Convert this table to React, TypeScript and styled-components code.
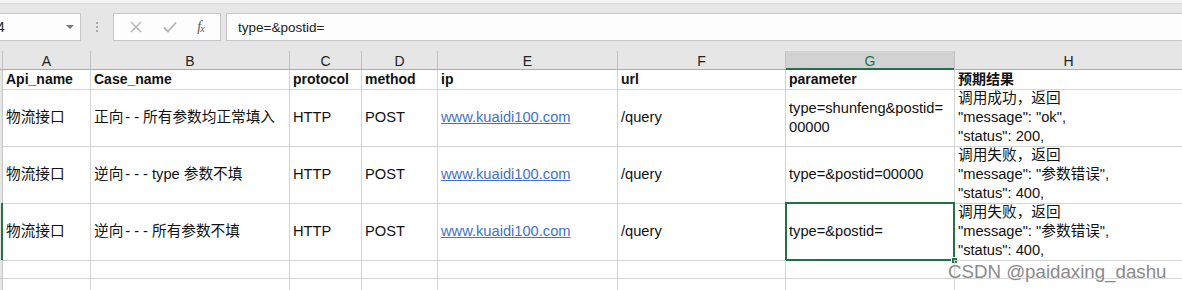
import styled, { createGlobalStyle } from "styled-components";

const GlobalStyle = createGlobalStyle`
  html, body {
    margin: 0;
    padding: 0;
    background: #ffffff;
    overflow: hidden;
  }
  body {
    font-family: "Liberation Sans", "Noto Sans CJK SC", sans-serif;
  }
`;

const COLS = "3px 88px 199px 72px 76px 180px 168px 169px 1fr";
const GRID = "#d4d4d4";
const GREEN = "#217346";

const Sheet = styled.div`
  position: relative;
  width: 1182px;
  height: 290px;
  overflow: hidden;
  background: #ffffff;
`;

const Toolbar = styled.div`
  height: 51px;
  box-sizing: border-box;
  background: #e6e6e6;
  border-top: 3px solid #f3f3f3;
  box-shadow: inset 0 1px 0 #dadada;
  display: flex;
  align-items: flex-start;
  padding-top: 10px;
`;

const NameBox = styled.div`
  width: 81px;
  height: 28px;
  box-sizing: border-box;
  background: #fdfdfd;
  border: 1px solid #c6c6c6;
  border-left: 0;
  display: flex;
  align-items: center;
  justify-content: space-between;
  padding-right: 6px;
  font-size: 14px;
  color: #222;
`;

const NameText = styled.span`
  margin-left: -3px;
`;

const Caret = styled.span`
  width: 0;
  height: 0;
  border-left: 4px solid transparent;
  border-right: 4px solid transparent;
  border-top: 4px solid #777;
`;

const Grip = styled.div`
  width: 32px;
  height: 28px;
  display: flex;
  align-items: center;
  justify-content: center;
`;

const ButtonBox = styled.div`
  width: 108px;
  height: 28px;
  box-sizing: border-box;
  background: #fdfdfd;
  border: 1px solid #c6c6c6;
  display: flex;
  align-items: center;
  justify-content: space-around;
  padding: 0 6px;
`;

const Fx = styled.span`
  font-family: "Liberation Serif", serif;
  font-style: italic;
  font-size: 14px;
  color: #555;
  letter-spacing: -1px;

  sub {
    font-size: 10px;
    vertical-align: -1px;
  }
`;

const FormulaInput = styled.div`
  flex: 1;
  margin-left: 5px;
  height: 28px;
  box-sizing: border-box;
  background: #fdfdfd;
  border: 1px solid #c6c6c6;
  border-right: 0;
  display: flex;
  align-items: center;
  padding-left: 11px;
  font-size: 13.5px;
  color: #222;
`;

const Row = styled.div<{ $h: number }>`
  display: grid;
  grid-template-columns: ${COLS};
  height: ${({ $h }) => $h}px;
`;

const LetterRow = styled(Row)`
  background: #e6e6e6;
  border-bottom: 1px solid #ababab;
  box-sizing: border-box;
`;

const Letter = styled.div<{ $active?: boolean }>`
  display: flex;
  align-items: center;
  justify-content: center;
  font-size: 14px;
  padding-top: 1px;
  box-sizing: border-box;
  border-right: 1px solid #c0c0c0;
  color: ${({ $active }) => ($active ? GREEN : "#222")};
  background: ${({ $active }) => ($active ? "#d2d2d2" : "transparent")};
  box-shadow: ${({ $active }) => ($active ? `inset 0 -2px 0 ${GREEN}` : "none")};
  margin-bottom: ${({ $active }) => ($active ? "-1px" : "0")};

  &:last-child {
    border-right: 0;
  }
`;

const RowHead = styled.div<{ $active?: boolean }>`
  background: #e6e6e6;
  box-sizing: border-box;
  border-bottom: 1px solid #c6c6c6;
  border-right: 1px solid ${({ $active }) => ($active ? GREEN : "#c6c6c6")};
  box-shadow: ${({ $active }) => ($active ? `inset -1px 0 0 ${GREEN}` : "none")};
`;

const Cell = styled.div<{ $bold?: boolean; $link?: boolean }>`
  position: relative;
  box-sizing: border-box;
  border-right: 1px solid ${GRID};
  border-bottom: 1px solid ${GRID};
  padding-left: 3px;
  display: flex;
  flex-direction: column;
  justify-content: center;
  font-size: ${({ $bold }) => ($bold ? "14px" : "14.67px")};
  line-height: 19px;
  white-space: nowrap;
  overflow: visible;
  color: ${({ $link }) => ($link ? "#4472c9" : "#111")};
  font-weight: ${({ $bold }) => ($bold ? 700 : 400)};
  text-decoration: ${({ $link }) => ($link ? "underline" : "none")};

  &:last-child {
    border-right: 0;
  }
`;

const Dashes = styled.span`
  letter-spacing: 4px;
  padding-left: 2px;
`;

const Selection = styled.div`
  position: absolute;
  left: -1px;
  top: -1px;
  right: -1px;
  bottom: -1px;
  border: 2px solid ${GREEN};
  pointer-events: none;
`;

const FillHandle = styled.div`
  position: absolute;
  right: -5px;
  bottom: -5px;
  width: 5px;
  height: 5px;
  background: ${GREEN};
  border: 1px solid #ffffff;
`;

const Watermark = styled.div`
  position: absolute;
  left: 948px;
  top: 261px;
  font-family: "Liberation Sans", sans-serif;
  font-size: 18.7px;
  color: #8a8a8a;
  text-shadow: 0 0 1px #ffffff;
  white-space: nowrap;
`;

const headers = ["Api_name", "Case_name", "protocol", "method", "ip", "url", "parameter", "预期结果"];
const letters = ["A", "B", "C", "D", "E", "F", "G", "H"];

const rows = [
  {
    api: "物流接口",
    pre: "正向",
    dash: "--",
    post: "所有参数均正常填入",
    param: ["type=shunfeng&postid=", "00000"],
    expect: ["调用成功，返回", "\"message\": \"ok\",", "\"status\": 200,"],
  },
  {
    api: "物流接口",
    pre: "逆向",
    dash: "---",
    post: "type 参数不填",
    param: ["type=&postid=00000"],
    expect: ["调用失败，返回", "\"message\": \"参数错误\",", "\"status\": 400,"],
  },
  {
    api: "物流接口",
    pre: "逆向",
    dash: "---",
    post: "所有参数不填",
    param: ["type=&postid="],
    expect: ["调用失败，返回", "\"message\": \"参数错误\",", "\"status\": 400,"],
    selected: true,
  },
];

const Lines = ({ items }: { items: string[] }) => (
  <>
    {items.map((t, i) => (
      <span key={i}>{t}</span>
    ))}
  </>
);

const EmptyRow = ({ h }: { h: number }) => (
  <Row $h={h}>
    <RowHead />
    {letters.map((l) => (
      <Cell key={l} />
    ))}
  </Row>
);

export default function App() {
  return (
    <Sheet>
      <GlobalStyle />
      <Toolbar>
        <NameBox>
          <NameText>4</NameText>
          <Caret />
        </NameBox>
        <Grip>
          <svg width="4" height="12" viewBox="0 0 4 12">
            <circle cx="2" cy="2" r="1.1" fill="#9a9a9a" />
            <circle cx="2" cy="6" r="1.1" fill="#9a9a9a" />
            <circle cx="2" cy="10" r="1.1" fill="#9a9a9a" />
          </svg>
        </Grip>
        <ButtonBox>
          <svg width="12" height="12" viewBox="0 0 12 12">
            <path d="M1 1 L11 11 M11 1 L1 11" stroke="#b4b4b4" strokeWidth="1.4" fill="none" />
          </svg>
          <svg width="14" height="12" viewBox="0 0 14 12">
            <path d="M1 6.5 L5 10.5 L13 1.5" stroke="#b4b4b4" strokeWidth="1.8" fill="none" />
          </svg>
          <Fx>
            f<sub>x</sub>
          </Fx>
        </ButtonBox>
        <FormulaInput>type=&amp;postid=</FormulaInput>
      </Toolbar>

      <LetterRow $h={19}>
        <Letter />
        {letters.map((l) => (
          <Letter key={l} $active={l === "G"}>
            {l}
          </Letter>
        ))}
      </LetterRow>

      <Row $h={19}>
        <RowHead />
        {headers.map((h) => (
          <Cell key={h} $bold>
            {h}
          </Cell>
        ))}
      </Row>

      {rows.map((r, i) => (
        <Row key={i} $h={57}>
          <RowHead $active={r.selected} />
          <Cell>{r.api}</Cell>
          <Cell>
            <span>
              {r.pre}
              <Dashes>{r.dash}</Dashes>
              {r.post}
            </span>
          </Cell>
          <Cell>HTTP</Cell>
          <Cell>POST</Cell>
          <Cell $link>
            <span>www.kuaidi100.com</span>
          </Cell>
          <Cell>/query</Cell>
          <Cell>
            <Lines items={r.param} />
            {r.selected && (
              <Selection>
                <FillHandle />
              </Selection>
            )}
          </Cell>
          <Cell>
            <Lines items={r.expect} />
          </Cell>
        </Row>
      ))}

      <EmptyRow h={19} />
      <EmptyRow h={19} />

      <Watermark>CSDN @paidaxing_dashu</Watermark>
    </Sheet>
  );
}
